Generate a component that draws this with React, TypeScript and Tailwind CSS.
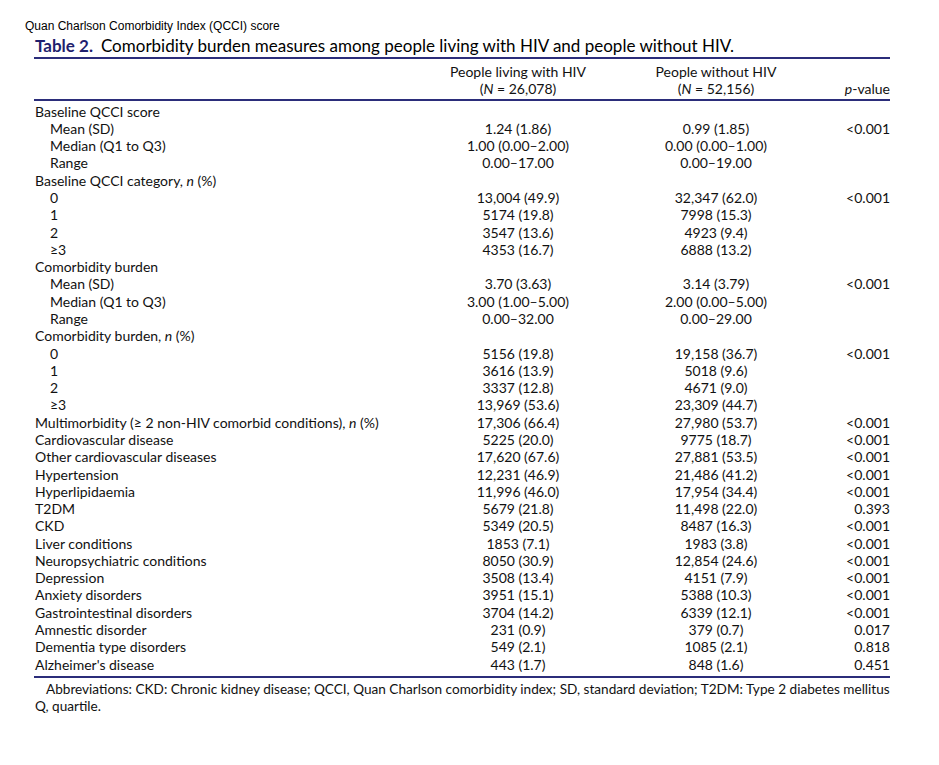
import React from "react";

type Row = { label: React.ReactNode; a?: string; b?: string; p?: string; indent?: boolean };

const rows: Row[] = [
  { label: "Baseline QCCI score" },
  { label: "Mean (SD)", a: "1.24 (1.86)", b: "0.99 (1.85)", p: "<0.001", indent: true },
  { label: "Median (Q1 to Q3)", a: "1.00 (0.00–2.00)", b: "0.00 (0.00–1.00)", indent: true },
  { label: "Range", a: "0.00–17.00", b: "0.00–19.00", indent: true },
  { label: <>Baseline QCCI category, <i>n</i> (%)</> },
  { label: "0", a: "13,004 (49.9)", b: "32,347 (62.0)", p: "<0.001", indent: true },
  { label: "1", a: "5174 (19.8)", b: "7998 (15.3)", indent: true },
  { label: "2", a: "3547 (13.6)", b: "4923 (9.4)", indent: true },
  { label: "≥3", a: "4353 (16.7)", b: "6888 (13.2)", indent: true },
  { label: "Comorbidity burden" },
  { label: "Mean (SD)", a: "3.70 (3.63)", b: "3.14 (3.79)", p: "<0.001", indent: true },
  { label: "Median (Q1 to Q3)", a: "3.00 (1.00–5.00)", b: "2.00 (0.00–5.00)", indent: true },
  { label: "Range", a: "0.00–32.00", b: "0.00–29.00", indent: true },
  { label: <>Comorbidity burden, <i>n</i> (%)</> },
  { label: "0", a: "5156 (19.8)", b: "19,158 (36.7)", p: "<0.001", indent: true },
  { label: "1", a: "3616 (13.9)", b: "5018 (9.6)", indent: true },
  { label: "2", a: "3337 (12.8)", b: "4671 (9.0)", indent: true },
  { label: "≥3", a: "13,969 (53.6)", b: "23,309 (44.7)", indent: true },
  { label: <>Multimorbidity (≥ 2 non-HIV comorbid conditions), <i>n</i> (%)</>, a: "17,306 (66.4)", b: "27,980 (53.7)", p: "<0.001" },
  { label: "Cardiovascular disease", a: "5225 (20.0)", b: "9775 (18.7)", p: "<0.001" },
  { label: "Other cardiovascular diseases", a: "17,620 (67.6)", b: "27,881 (53.5)", p: "<0.001" },
  { label: "Hypertension", a: "12,231 (46.9)", b: "21,486 (41.2)", p: "<0.001" },
  { label: "Hyperlipidaemia", a: "11,996 (46.0)", b: "17,954 (34.4)", p: "<0.001" },
  { label: "T2DM", a: "5679 (21.8)", b: "11,498 (22.0)", p: "0.393" },
  { label: "CKD", a: "5349 (20.5)", b: "8487 (16.3)", p: "<0.001" },
  { label: "Liver conditions", a: "1853 (7.1)", b: "1983 (3.8)", p: "<0.001" },
  { label: "Neuropsychiatric conditions", a: "8050 (30.9)", b: "12,854 (24.6)", p: "<0.001" },
  { label: "Depression", a: "3508 (13.4)", b: "4151 (7.9)", p: "<0.001" },
  { label: "Anxiety disorders", a: "3951 (15.1)", b: "5388 (10.3)", p: "<0.001" },
  { label: "Gastrointestinal disorders", a: "3704 (14.2)", b: "6339 (12.1)", p: "<0.001" },
  { label: "Amnestic disorder", a: "231 (0.9)", b: "379 (0.7)", p: "0.017" },
  { label: "Dementia type disorders", a: "549 (2.1)", b: "1085 (2.1)", p: "0.818" },
  { label: "Alzheimer's disease", a: "443 (1.7)", b: "848 (1.6)", p: "0.451" },
];

export default function App() {
  return (
    <div className="w-[939px] h-[765px] bg-white text-[#111] font-['Lato','Open_Sans',sans-serif]">
      <div className="pt-[18px] pl-[25px] text-[12px] leading-[16px] text-black font-['Liberation_Sans',Arial,sans-serif]">
        Quan Charlson Comorbidity Index (QCCI) score
      </div>

      <div className="ml-[34px] w-[856px]">
        <h2 className="text-[17px] leading-[23px] pl-[1px] text-black whitespace-nowrap">
          <span className="font-bold text-[#1f1f6e] mr-[8px]">Table 2.</span>
          Comorbidity burden measures among people living with HIV and people without HIV.
        </h2>
        <div className="h-[2px] bg-[#2b2d7a]" />

        <div className="grid grid-cols-[386px_196px_200px_74px] text-[14px] leading-[17.3px] pt-[4px] pb-[1px] border-b-2 border-[#2b2d7a]">
          <div />
          <div className="text-center">
            People living with HIV
            <br />(<i>N</i> = 26,078)
          </div>
          <div className="text-center">
            People without HIV
            <br />(<i>N</i> = 52,156)
          </div>
          <div className="text-right self-end">
            <i>p</i>-value
          </div>
        </div>

        <div className="grid grid-cols-[386px_196px_200px_74px] text-[14px] leading-[17.28px] pt-[2px] pb-[3px] border-b-2 border-[#2b2d7a]">
          {rows.map((r, i) => (
            <React.Fragment key={i}>
              <div className={r.indent ? "pl-[16px]" : "pl-[1px]"}>{r.label}</div>
              <div className="text-center">{r.a}</div>
              <div className="text-center">{r.b}</div>
              <div className="text-right">{r.p}</div>
            </React.Fragment>
          ))}
        </div>

        <p className="text-[13.6px] leading-[17px] pt-[3px] pl-[1px] whitespace-nowrap">
          <span className="pl-[11px]">Abbreviations: CKD: Chronic kidney disease; QCCI, Quan Charlson comorbidity index; SD, standard deviation; T2DM: Type 2 diabetes mellitus</span>
          <br />Q, quartile.
        </p>
      </div>
    </div>
  );
}
